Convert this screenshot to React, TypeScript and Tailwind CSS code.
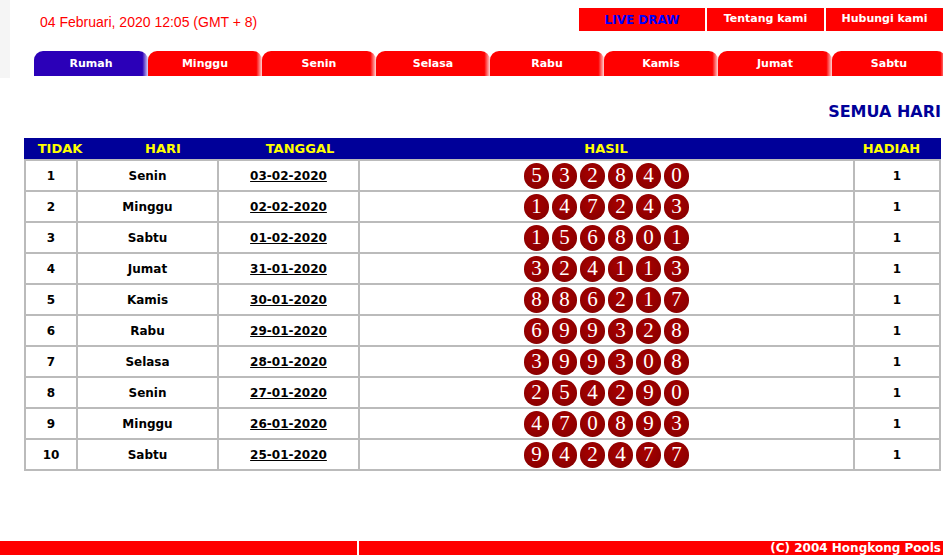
import React from 'react';

// Results data
const ROWS = [
  { no: 1, hari: 'Senin', tanggal: '03-02-2020', hasil: '532840' },
  { no: 2, hari: 'Minggu', tanggal: '02-02-2020', hasil: '147243' },
  { no: 3, hari: 'Sabtu', tanggal: '01-02-2020', hasil: '156801' },
  { no: 4, hari: 'Jumat', tanggal: '31-01-2020', hasil: '324113' },
  { no: 5, hari: 'Kamis', tanggal: '30-01-2020', hasil: '886217' },
  { no: 6, hari: 'Rabu', tanggal: '29-01-2020', hasil: '699328' },
  { no: 7, hari: 'Selasa', tanggal: '28-01-2020', hasil: '399308' },
  { no: 8, hari: 'Senin', tanggal: '27-01-2020', hasil: '254290' },
  { no: 9, hari: 'Minggu', tanggal: '26-01-2020', hasil: '470893' },
  { no: 10, hari: 'Sabtu', tanggal: '25-01-2020', hasil: '942477' },
];

const TABS = ['Rumah', 'Minggu', 'Senin', 'Selasa', 'Rabu', 'Kamis', 'Jumat', 'Sabtu'];

function Ball({ n }: { n: string }) {
  return (
    <div className="w-[25px] h-[26px] rounded-full bg-[radial-gradient(circle_at_45%_40%,#a80000,#8c0000_70%,#7a0000)] flex items-center justify-center text-white text-[21px] font-normal leading-none font-['Liberation_Serif',serif]">
      {n}
    </div>
  );
}

export default function App() {
  return (
    <div className="w-[943px] h-[555px] overflow-hidden bg-white flex flex-col font-['DejaVu_Sans',Verdana,sans-serif]">
      {/* Top header */}
      <div className="flex h-[78px] shrink-0">
        <div className="w-[10px] shrink-0 bg-[#f5f5f5]"></div>
        <div className="flex-1 flex flex-col min-w-0">
          <div className="flex h-[51px] justify-between">
            <div className="pl-[30px] pt-[12px] text-[14px] text-[#ff0000] font-['Liberation_Sans',Arial,sans-serif]">
              04 Februari, 2020 12:05 (GMT + 8)
            </div>
            <div className="flex gap-[2px] pt-[8px] h-[31px] shrink-0">
              <div className="w-[126px] bg-[#ff0000] flex items-center justify-center text-[12px] font-bold text-[#0000ff]">LIVE DRAW</div>
              <div className="w-[117px] bg-[#ff0000] flex items-center justify-center text-[11px] font-bold text-white">Tentang kami</div>
              <div className="w-[117px] bg-[#ff0000] flex items-center justify-center text-[11px] font-bold text-white">Hubungi kami</div>
            </div>
          </div>
          <div className="flex pl-[24px] h-[25px] overflow-hidden">
            {TABS.map((t, i) => (
              <div
                key={t}
                className={
                  i === 0
                    ? 'w-[114px] shrink-0 rounded-t-[9px] pt-[1px] bg-[linear-gradient(90deg,#2b00b8_95%,#d8d0f4)] flex items-center justify-center text-[11px] font-bold text-white'
                    : 'w-[114px] shrink-0 rounded-t-[9px] pt-[1px] bg-[linear-gradient(90deg,#ff0000_95%,#ffd0d0)] flex items-center justify-center text-[11px] font-bold text-white'
                }
              >
                {t}
              </div>
            ))}
          </div>
        </div>
      </div>

      {/* Title */}
      <div className="h-[60px] shrink-0 flex items-center justify-end pr-[2px] pt-[8px] text-[16px] font-bold text-[#000099]">
        SEMUA HARI
      </div>

      {/* Table */}
      <div className="ml-[24px] w-[917px] shrink-0">
        <div className="flex h-[21px] bg-[#000099] text-[13px] font-bold text-[#ffff00] items-center">
          <div className="w-[72px] text-center">TIDAK</div>
          <div className="w-[134px] text-center">HARI</div>
          <div className="w-[140px] text-center">TANGGAL</div>
          <div className="w-[472px] text-center">HASIL</div>
          <div className="flex-1 text-center">HADIAH</div>
        </div>
        <div className="border-x-2 border-t-2 border-b-2 border-[#bbbbbb]">
          {ROWS.map((r, i) => (
            <div
              key={r.no}
              className={
                i === ROWS.length - 1
                  ? 'flex h-[29px] text-[12px] font-bold text-black'
                  : 'flex h-[31px] border-b-2 border-[#bbbbbb] text-[12px] font-bold text-black'
              }
            >
              <div className="w-[52px] border-r-2 border-[#bbbbbb] flex items-center justify-center">{r.no}</div>
              <div className="w-[141px] border-r-2 border-[#bbbbbb] flex items-center justify-center">{r.hari}</div>
              <div className="w-[141px] border-r-2 border-[#bbbbbb] flex items-center justify-center">
                <span className="underline">{r.tanggal}</span>
              </div>
              <div className="w-[495px] border-r-2 border-[#bbbbbb] flex items-center justify-center gap-[3px]">
                {r.hasil.split('').map((d, j) => (
                  <Ball key={j} n={d} />
                ))}
              </div>
              <div className="flex-1 flex items-center justify-center">1</div>
            </div>
          ))}
        </div>
      </div>

      {/* Footer */}
      <div className="mt-auto flex gap-[2px] h-[14px] shrink-0">
        <div className="w-[357px] bg-[#ff0000]"></div>
        <div className="flex-1 bg-[#ff0000] flex justify-end items-start pr-[2px] pt-[1px] text-[12px] font-bold text-white leading-none">
          (C) 2004 Hongkong Pools
        </div>
      </div>
    </div>
  );
}
